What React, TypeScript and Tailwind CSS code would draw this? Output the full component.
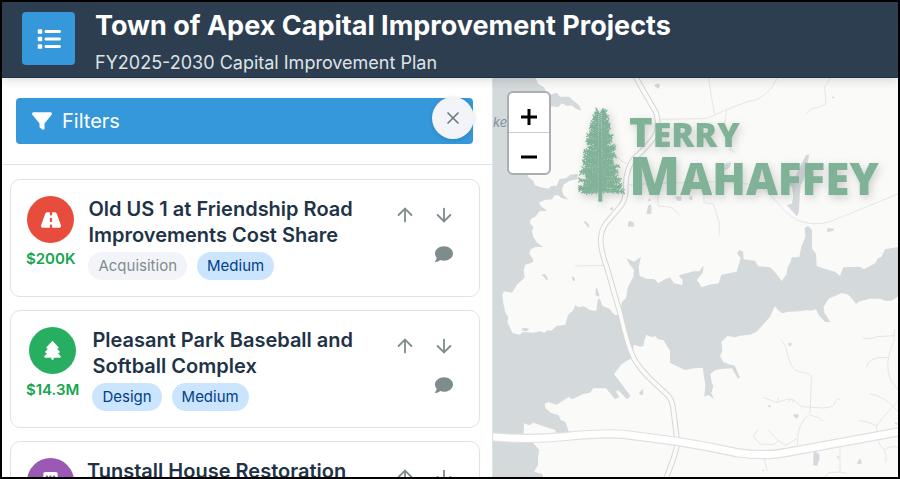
import type { ReactNode } from "react";
import { FaList, FaFilter, FaRoad, FaTree, FaComment, FaBuilding } from "react-icons/fa6";
import { ArrowUp, ArrowDown, X } from "lucide-react";

type Chip = { label: string; tone: "muted" | "info" };
type Project = { title: string; cost?: string; color: string; icon: ReactNode; chips: Chip[] };

const projects: Project[] = [
  {
    title: "Old US 1 at Friendship Road Improvements Cost Share",
    cost: "$200K",
    color: "bg-[#e74c3c]",
    icon: <FaRoad size={20} />,
    chips: [
      { label: "Acquisition", tone: "muted" },
      { label: "Medium", tone: "info" },
    ],
  },
  {
    title: "Pleasant Park Baseball and Softball Complex",
    cost: "$14.3M",
    color: "bg-[#27ae60]",
    icon: <FaTree size={19} />,
    chips: [
      { label: "Design", tone: "info" },
      { label: "Medium", tone: "info" },
    ],
  },
  {
    title: "Tunstall House Restoration",
    color: "bg-[#9b59b6]",
    icon: <FaBuilding size={19} />,
    chips: [],
  },
];

function ProjectCard({ project }: { project: Project }) {
  return (
    <li className="flex min-h-[118px] shrink-0 gap-[13px] rounded-[10px] border border-[#dce4e8] bg-white pt-4 pr-4 pl-[15px]">
      <div className="flex min-w-12 flex-col items-center gap-2">
        <span className={"flex size-[47px] items-center justify-center rounded-full text-white " + project.color}>
          {project.icon}
        </span>
        {project.cost && (
          <span className="text-[15px] leading-4 font-semibold text-[#16a550]">{project.cost}</span>
        )}
      </div>
      <div className="flex min-w-0 flex-1 flex-col gap-1">
        <h2 className="text-[20px] leading-[26px] font-semibold text-[#1f3347]">{project.title}</h2>
        <div className="flex gap-[10px]">
          {project.chips.map((chip) => (
            <span
              key={chip.label}
              className={
                "rounded-full px-[10px] text-[15px] leading-7 " +
                (chip.tone === "info" ? "bg-[#cce5ff] text-[#004085]" : "bg-[#f3f4f9] text-[#7f8c8d]")
              }
            >
              {chip.label}
            </span>
          ))}
        </div>
      </div>
      <div className="-mt-0.5 grid h-[78px] w-[78px] grid-cols-2 text-[#7f8c8d]">
        <button aria-label="Move up" className="flex items-center justify-center">
          <ArrowUp size={22} strokeWidth={2} />
        </button>
        <button aria-label="Move down" className="flex items-center justify-center">
          <ArrowDown size={22} strokeWidth={2} />
        </button>
        <button aria-label="Comment" className="col-start-2 flex items-center justify-center">
          <FaComment size={18} />
        </button>
      </div>
    </li>
  );
}

const northLand =
  "M135 20L145 42L162 52L168 62L182 74L200 68L210 80L238 80L250 92L266 104L275 122L258 116L245 106L232 108L216 100L204 112L180 108L170 130L120 180L110 310L116 322L130 332L135 346L152 352L176 356L184 348L200 347L208 328L230 324L240 314L264 312L262 328L240 332L222 343L216 358L220 374L235 389L214 384L205 376L194 376L186 388L164 390L146 398L154 410L172 422L148 424L138 438L122 448L120 460L130 472L126 484L130 502L142 518L160 532L138 530L122 538L118 550L128 566L130 576L106 584L101 600L104 622L80 645L66 668L42 664L37 674L40 700L46 728L55 742L52 756L68 790L90 794L98 786L130 788L150 784L164 788L174 780L182 783L200 768L226 764L234 735L250 720L256 705L266 712L282 709L300 720L319 723L323 690L328 685L338 708L358 716L374 735L390 735L396 695L408 685L414 650L430 622L432 600L418 582L410 565L432 575L453 560L446 590L449 618L470 626L494 628L505 640L525 628L540 622L552 640L577 645L578 630L566 616L590 610L612 604L628 604L641 586L638 608L620 630L628 640L634 652L658 644L686 640L694 614L740 605L746 585L752 565L741 550L748 540L759 545L761 568L795 572L804 588L840 592L858 610L875 633L890 612L893 592L902 576L905 562L920 562L928 560L934 530L946 500L944 474L954 468L966 480L966 535L978 552L980 588L1005 597L1035 605L1050 618L1060 592L1110 590L1122 598L1155 580L1164 565L1175 560L1185 538L1230 530L1230 20Z";
const southLand =
  "M1230 676L1204 692L1185 692L1170 686L1140 686L1110 694L1098 702L1086 686L1075 674L1055 669L1030 680L1018 685L1010 695L1001 710L1003 728L1021 756L1006 756L988 738L978 718L962 722L950 720L930 724L895 725L876 730L864 720L855 708L848 722L840 740L800 785L780 794L750 797L735 802L712 798L694 815L697 842L690 858L700 876L720 884L734 886L740 900L750 924L743 924L726 895L700 896L676 900L661 912L665 938L670 948L664 970L672 988L655 975L643 980L646 945L638 893L612 895L584 900L540 878L540 842L520 810L505 808L495 798L486 802L470 794L464 808L460 828L450 830L432 824L425 864L395 882L372 912L422 978L411 988L384 960L378 965L388 982L375 988L348 955L310 955L300 968L280 972L247 988L236 981L200 1004L174 996L164 1002L166 1014L182 1028L206 1036L212 1050L226 1056L238 1090L200 1098L196 1080L170 1072L130 1058L118 1066L102 1060L100 1110L130 1120L148 1140L144 1160L144 1185L132 1205L158 1212L158 1230L1230 1230Z";
const ponds =
  "M493 44L505 40L510 46L506 56L496 50ZM280 455L288 454L298 466L296 474ZM414 458L420 452L431 458L432 470L414 470ZM360 415L367 410L370 420L362 421ZM474 408L482 402L485 414L483 432L469 432ZM474 390L481 384L482 392L476 394ZM555 380L575 378L574 392L562 392ZM598 380L606 378L607 390L598 388ZM155 614L165 612L174 626L172 632ZM246 618L254 624L254 634L247 630ZM317 655L322 656L328 674L326 680L317 676ZM94 776L106 773L118 778L110 784L98 782ZM447 970L458 956L460 975L450 974ZM1025 80L1033 80L1030 86ZM1012 474L1032 476L1030 482L1012 487ZM898 324L914 322L948 255L958 254L942 330L932 345L926 430L920 438L890 405L905 402L910 380L906 350L890 346L882 332ZM698 288L710 278L724 278L718 294L704 302ZM895 820L905 818L904 828L896 827ZM834 1008L838 1004L844 1010L836 1012ZM909 1034L925 1032L926 1040L918 1046ZM971 1142L988 1152L988 1170L981 1188L970 1186ZM1040 1158L1048 1160L1046 1168ZM1101 1180L1110 1164L1116 1180L1104 1183ZM816 1200L822 1199L822 1205ZM1212 1058L1222 1058L1220 1066Z";
const lanes =
  "M508 148L640 146Q660 144 710 118L770 96Q830 90 862 24M656 24L664 80L674 132M710 118L704 165L722 240L734 248M1022 24L1004 50L1008 100Q995 112 966 115L946 132M410 345L500 340L700 335L800 345C850 370 880 430 920 450Q970 470 1020 455L1224 372M502 345L504 408L545 412L568 434M642 336L642 398L670 402L688 460L688 496M255 588L345 586M372 250L395 274L412 282M873 808L888 832Q900 905 930 905L958 912Q966 915 964 930L960 1030Q920 1060 922 1125M820 982L860 998L895 987L912 990L935 1010L1000 1014Q1035 1012 1036 995Q1040 980 1052 990M862 996L866 982M895 998L900 988M908 998L910 990M960 1035L988 1044L998 1054M805 1078L790 1098L810 1122L852 1124L864 1112L835 1080M864 1112L888 1126L920 1106M1118 802Q1135 812 1160 800L1212 797M1213 778L1212 812Q1180 880 1202 930L1224 960M1195 862Q1130 860 1130 892M1140 972Q1180 975 1224 1025M1108 1052Q1140 1054 1160 1068Q1162 1060 1224 992M1160 1065L1160 1088M1165 1112Q1170 1130 1182 1140Q1200 1125 1224 1132M1182 1140Q1192 1155 1186 1178M1050 1130L1050 1206L1070 1210M1050 1206L1015 1208L1005 1221M822 1165L832 1202";
const parkway =
  "M436 20L498 128Q508 160 498 190Q488 215 430 268Q408 300 407 345Q410 385 392 408L348 460Q328 490 333 525Q338 560 350 590L392 735Q420 860 445 885Q460 910 525 968Q548 985 550 1020L562 1115Q562 1140 528 1225";
const highway = "M6 1101Q120 1110 220 1100Q340 1088 400 1093L560 1114Q650 1128 740 1148Q830 1160 890 1147L1230 1085";

function MapCanvas() {
  return (
    <svg
      className="absolute inset-0 size-full bg-[#d4d9dc]"
      viewBox="9 24 1215 1197"
      preserveAspectRatio="xMinYMin slice"
      aria-hidden="true"
    >
      <path d={northLand} fill="#fafaf8" />
      <path d={southLand} fill="#fafaf8" />
      <path d={ponds} fill="#d4d9dc" />
      <g fill="none" strokeLinejoin="round">
        <path d={lanes} stroke="#e6e6e5" strokeWidth="3" />
        <path d={parkway} stroke="#d6d6d6" strokeWidth="17" />
        <path d={parkway} stroke="#fbfbfa" strokeWidth="11" />
        <path d={highway} stroke="#e0e0df" strokeWidth="28" />
        <path d={highway} stroke="#ffffff" strokeWidth="21" />
      </g>
    </svg>
  );
}

function buildBranches() {
  let seed = 11;
  const rand = () => {
    seed = (seed * 16807) % 2147483647;
    return seed / 2147483647;
  };
  let d = "";
  const count = 84;
  for (let i = 0; i < count; i++) {
    const t = i / count;
    const y = 16 + t * 238;
    const reach = (12 + 60 * Math.pow(t, 0.75)) * (0.62 + rand() * 0.4);
    const side = i % 2 === 0 ? 1 : -1;
    const lift = (1 - t) * 16 + rand() * 10 - 6;
    const ex = 66 + side * reach;
    const ey = y - lift + 4;
    d += `M66 ${y.toFixed(1)}Q${(66 + side * reach * 0.5).toFixed(1)} ${(y + 6).toFixed(1)} ${ex.toFixed(1)} ${ey.toFixed(1)}`;
    const twigs = Math.max(2, Math.round(reach / 8));
    for (let k = 1; k <= twigs; k++) {
      const f = k / (twigs + 0.5);
      const bx = 66 + side * reach * f;
      const by = y + (ey - y) * f + 3 * (1 - f);
      d += `M${bx.toFixed(1)} ${by.toFixed(1)}l${(side * (3 + rand() * 5)).toFixed(1)} ${(3 + rand() * 6).toFixed(1)}`;
      d += `M${bx.toFixed(1)} ${by.toFixed(1)}l${(side * (4 + rand() * 5)).toFixed(1)} ${(-2 - rand() * 7).toFixed(1)}`;
    }
  }
  return d;
}
const branches = buildBranches();

function Logo() {
  return (
    <div className="absolute top-[29px] left-[85px] flex gap-1 font-['Open_Sans',sans-serif] font-extrabold text-[#7fb296] drop-shadow-[2px_3px_4px_rgba(0,0,0,0.18)]">
      <svg width="47" height="96" viewBox="0 0 141 288" fill="none" stroke="currentColor" aria-hidden="true">
        <path d="M66 2L62 100L61 284H73L70 100Z" fill="currentColor" stroke="none" />
        <path d={branches} strokeWidth="3.6" />
      </svg>
      <div>
        <div className="text-[40px] leading-[50px]">
          T<span className="text-[34px]">ERRY</span>
        </div>
        <div className="-mt-2 text-[53px] leading-[48px]">
          M<span className="text-[44px]">AHAFFEY</span>
        </div>
      </div>
    </div>
  );
}

export default function App() {
  return (
    <div className="flex h-screen flex-col overflow-hidden border-2 border-black bg-white font-[Inter,'Liberation_Sans',sans-serif]">
      <header className="z-20 flex shrink-0 items-start gap-5 border-b border-[#1f3347] bg-[#2c3e50] px-5 pt-[10px] text-white shadow-[0_2px_10px_rgba(0,0,0,0.15)]">
        <button aria-label="Toggle project list" className="flex size-[53px] items-center justify-center rounded bg-[#3498db]">
          <FaList size={24} />
        </button>
        <div className="-mt-1 whitespace-nowrap">
          <h1 className="text-[27px] leading-9 font-bold">Town of Apex Capital Improvement Projects</h1>
          <p className="pt-1 text-[18px] leading-[29px] text-[#dfe3e7]">FY2025-2030 Capital Improvement Plan</p>
        </div>
      </header>
      <div className="flex min-h-0 flex-1">
        <aside className="relative flex w-[491px] shrink-0 flex-col overflow-hidden border-r border-[#dce4e8]">
          <div className="border-b border-[#dce4e8] px-[14px] pt-5 pb-5">
            <button className="flex h-[46px] w-[457px] items-center gap-[10px] rounded bg-[#3498db] px-4 text-[20px] text-white">
              <FaFilter size={20} />
              Filters
            </button>
          </div>
          <button
            aria-label="Close panel"
            className="absolute top-[19px] right-[18px] flex size-[42px] items-center justify-center rounded-full bg-[#f3f4f9] text-[#6c7a7d] shadow-[0_1px_4px_rgba(0,0,0,0.15)]"
          >
            <X size={20} />
          </button>
          <ul className="flex flex-col gap-[13px] pt-[14px] pr-3 pl-2">
            {projects.map((project) => (
              <ProjectCard key={project.title} project={project} />
            ))}
          </ul>
        </aside>
        <main className="relative min-w-0 flex-1 overflow-hidden">
          <MapCanvas />
          <span className="absolute top-[35px] left-0 text-[13px] text-[#7d929d] italic">ke</span>
          <div className="absolute top-[13px] left-[14px] flex flex-col overflow-hidden rounded-md border-2 border-[#a9aeb0] bg-white">
            <button aria-label="Zoom in" className="flex h-10 w-10 items-center justify-center border-b border-[#ccc] pt-2">
              <svg width="18" height="18" viewBox="0 0 18 18" stroke="#000" strokeWidth="3" aria-hidden="true">
                <path d="M1 9H17M9 1V17" />
              </svg>
            </button>
            <button aria-label="Zoom out" className="flex h-10 w-10 items-center justify-center pt-2">
              <svg width="18" height="18" viewBox="0 0 18 18" stroke="#000" strokeWidth="3" aria-hidden="true">
                <path d="M1 9H17" />
              </svg>
            </button>
          </div>
          <Logo />
        </main>
      </div>
    </div>
  );
}
